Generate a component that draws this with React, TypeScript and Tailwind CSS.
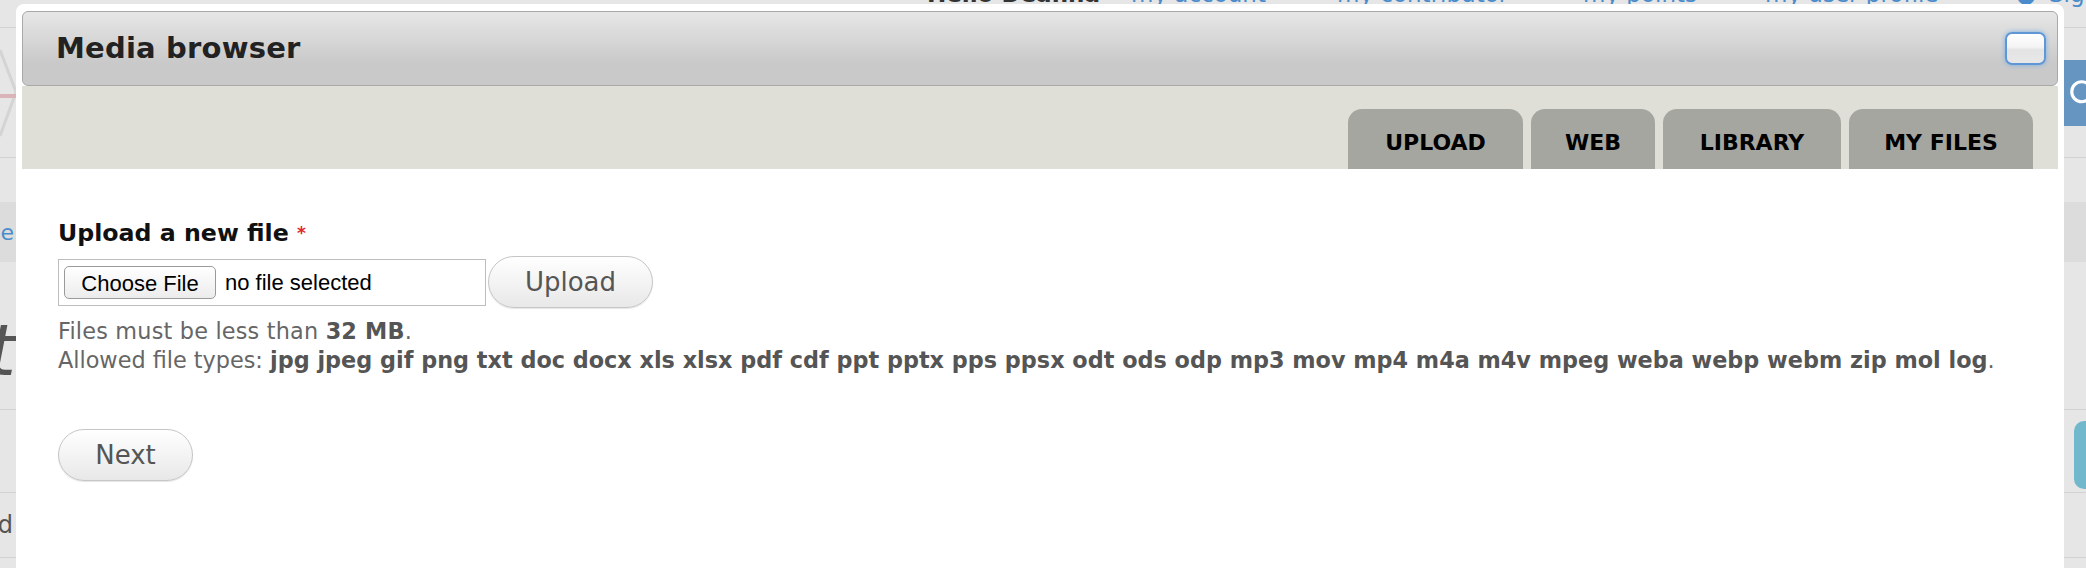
import React from "react";
import { Search } from "lucide-react";

const tabs = [
  { label: "UPLOAD", w: "w-[175px]" },
  { label: "WEB", w: "w-[124px]" },
  { label: "LIBRARY", w: "w-[178px]" },
  { label: "MY FILES", w: "w-[184px]" },
];

const fileTypes =
  "jpg jpeg gif png txt doc docx xls xlsx pdf cdf ppt pptx pps ppsx odt ods odp mp3 mov mp4 m4a m4v mpeg weba webp webm zip mol log";

// page sitting behind the dialog, only the edges show
const BackgroundPage = () => (
  <div className="flex flex-col h-[568px] bg-[#e6e6e6] font-['DejaVu_Sans',sans-serif]">
    {/* top nav */}
    <div className="h-[28px] border-b border-[#d2d2d2] overflow-hidden">
      <div className="flex items-end -mt-[16px] h-[21px] pl-[927px] text-[23px] leading-[21px] whitespace-nowrap">
        <span className="w-[204px] shrink-0 font-bold text-[#333]">Hello Deanna</span>
        <span className="w-[206px] shrink-0 text-[#4a8ccb]">my account</span>
        <span className="w-[246px] shrink-0 text-[#4a8ccb]">my contributor</span>
        <span className="w-[182px] shrink-0 text-[#4a8ccb]">my points</span>
        <span className="w-[251px] shrink-0 text-[#4a8ccb]">my user profile</span>
        <span className="w-[33px] shrink-0 text-[#4a8ccb]">●</span>
        <span className="text-[#4a8ccb]">Sign out</span>
      </div>
    </div>

    <div className="h-[130px] border-b border-[#d2d2d2] flex justify-between">
      <svg width="16" height="129" viewBox="0 0 16 129">
        <path d="M0 22 L16 64 L0 108" stroke="#d4d4d4" strokeWidth="3" fill="none" />
        <path d="M0 68 L16 68" stroke="#d8b4b8" strokeWidth="4" />
      </svg>
      <div className="mt-[32px] h-[66px] w-[22px] bg-[#6695c2] flex items-center overflow-hidden">
        <Search className="ml-[4px] shrink-0 text-white" size={30} strokeWidth={2.5} />
      </div>
    </div>

    <div className="h-[44px]" />

    <div className="h-[60px] bg-[#dcdcdc] flex items-center">
      <div className="w-[14px] overflow-hidden flex justify-end whitespace-nowrap text-[22px] text-[#4a8ccb]">
        Home
      </div>
    </div>

    <div className="h-[148px] border-b border-[#d2d2d2] pt-[48px]">
      <div className="w-[16px] overflow-hidden flex justify-end whitespace-nowrap text-[72px] leading-[80px] italic text-[#555]">
        Art
      </div>
    </div>

    <div className="h-[83px] border-b border-[#d2d2d2] flex justify-end items-end pb-[3px]">
      <div className="w-[12px] h-[68px] rounded-l-[10px] bg-[#72b8cc]" />
    </div>

    <div className="h-[65px] border-b border-[#d2d2d2] flex items-center">
      <div className="w-[13px] overflow-hidden flex justify-end whitespace-nowrap text-[24px] text-[#555]">
        Find
      </div>
    </div>

    <div className="flex-1" />
  </div>
);

const MediaBrowser = () => (
  <div className="absolute top-[4px] left-[16px] w-[2048px] bottom-0 bg-white rounded-t-[8px] px-[6px] pt-[7px] font-['DejaVu_Sans',sans-serif]">
    {/* title bar */}
    <div className="h-[75px] border border-[#a9a9a9] rounded-[6px] bg-[linear-gradient(to_bottom,#e6e6e6_0%,#d6d6d6_40%,#c9c9c9_70%,#c9c9c9_100%)] flex items-center justify-between pl-[33px] pr-[11px]">
      <h1 className="text-[29px] font-bold text-[#222] tracking-[0.2px]">Media browser</h1>
      <button className="w-[41px] h-[33px] rounded-[7px] border-2 border-[#5f97d6] shadow-[0_0_5px_#7aaee6] bg-[linear-gradient(to_bottom,#ffffff_0%,#f4f4f4_45%,#e3e3e3_55%,#e8e8e8_100%)]" />
    </div>

    {/* tabs */}
    <div className="h-[83px] bg-[#dfdfd8] flex justify-end items-end gap-[8px] pr-[25px]">
      {tabs.map((t) => (
        <div
          key={t.label}
          className={`${t.w} h-[60px] rounded-t-[14px] bg-[#a6a6a0] flex items-center justify-center pt-[6px] text-[22px] font-bold text-black`}
        >
          {t.label}
        </div>
      ))}
    </div>

    {/* upload form */}
    <div className="px-[36px] pt-[49px]">
      <label className="block text-[23.7px] leading-[30px] font-bold text-[#111]">
        Upload a new file <span className="text-[#e0282b] text-[17px] align-top">*</span>
      </label>

      <div className="mt-[8px] flex items-center">
        <div className="w-[428px] h-[47px] border border-[#bdbdbd] flex items-center pl-[5px] font-['Liberation_Sans',sans-serif]">
          <button className="h-[33px] w-[152px] rounded-[5px] border border-[#9a9a9a] bg-[linear-gradient(to_bottom,#ffffff,#ececec)] text-[22px] text-black">
            Choose File
          </button>
          <span className="ml-[9px] text-[22px] text-black">no file selected</span>
        </div>
        <button className="ml-[2px] w-[165px] h-[52px] rounded-full border border-[#c6c6c6] bg-[linear-gradient(to_bottom,#ffffff,#e8e8e8)] shadow-[0_1px_1px_rgba(0,0,0,0.1)] text-[26px] text-[#555]">
          Upload
        </button>
      </div>

      <div className="mt-[9px] text-[22.35px] leading-[29px] text-[#666]">
        <p className="tracking-[0.2px]">
          Files must be less than <strong className="text-[#555]">32 MB</strong>.
        </p>
        <p>
          Allowed file types: <strong className="text-[#555]">{fileTypes}</strong>.
        </p>
      </div>

      <button className="mt-[54px] w-[135px] h-[52px] rounded-full border border-[#c6c6c6] bg-[linear-gradient(to_bottom,#ffffff,#e8e8e8)] shadow-[0_1px_1px_rgba(0,0,0,0.1)] text-[26px] text-[#555]">
        Next
      </button>
    </div>
  </div>
);

export default function App() {
  return (
    <div className="relative w-[2086px] h-[568px] overflow-hidden">
      <BackgroundPage />
      <MediaBrowser />
    </div>
  );
}
